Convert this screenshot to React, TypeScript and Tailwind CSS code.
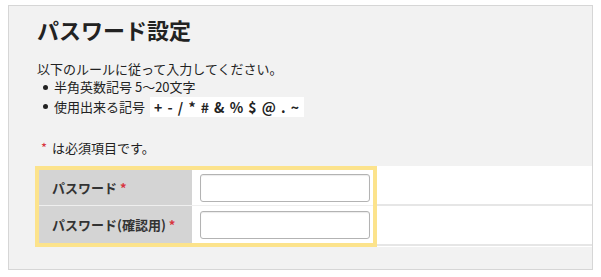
const font = "font-['Noto_Sans_CJK_JP','Noto_Sans',sans-serif]";

function Req() {
  return <span className="ml-[3px] text-[#d8343f]">*</span>;
}

function Row({
  label,
  first,
}: {
  label: string;
  first?: boolean;
}) {
  return (
    <div
      className={
        first
          ? "flex h-[35px]"
          : "flex h-[38px] border-t border-[#efefef]"
      }
    >
      <div className="flex w-[153px] items-center bg-[#d4d4d4] pl-[13px] text-[13px] font-bold text-[#333]">
        {label}
        <Req />
      </div>
      <div className="flex flex-1 items-center bg-white pl-[8px]">
        <input
          type="password"
          className="h-[28px] w-[170px] rounded-[3px] border border-[#b3b3b3] bg-white shadow-[inset_0_1px_1px_rgba(0,0,0,0.08)] outline-none"
        />
      </div>
    </div>
  );
}

function Bullet() {
  return <span className="ml-[6px] mr-[6px] h-[5px] w-[5px] shrink-0 rounded-full bg-[#222]" />;
}

export default function App() {
  return (
    <div className={`h-[277px] w-[601px] bg-white pl-[8px] pt-[5px] ${font}`}>
      <div className="h-[265px] w-[585px] border border-[#d6d6d6] bg-[#f2f2f2] pt-[8px] text-[#222]">
        <h1 className="pl-[28px] text-[22px] font-bold leading-[30px]">
          パスワード設定
        </h1>

        <div className="mt-[16px] pl-[28px] text-[13px]">
          <p className="leading-[18px]">以下のルールに従って入力してください。</p>
          <ul>
            <li className="flex h-[18px] items-center">
              <Bullet />
              半角英数記号 5〜20文字
            </li>
            <li className="flex h-[21px] items-center">
              <Bullet />
              使用出来る記号
              <span className="ml-[5px] bg-white px-[4px] text-[14px] font-bold leading-[20px] tracking-[1px]">
                + - / * # &amp; % $ @ . ~
              </span>
            </li>
          </ul>
        </div>

        <p className="mt-[22px] pl-[32px] text-[13px] leading-[18px]">
          <span className="text-[#d8343f]">*</span>
          <span className="ml-[5px]">は必須項目です。</span>
        </p>

        <div className="ml-[26px] mt-[9px] flex">
          <div className="w-[342px] border-4 border-[#fce38c]">
            <Row label="パスワード" first />
            <Row label="パスワード(確認用)" />
          </div>
          <div className="flex-1 bg-white">
            <div className="h-[40px] border-b-2 border-[#e6e6e6]" />
            <div className="h-[40px] border-b-2 border-[#e6e6e6]" />
          </div>
        </div>
      </div>
    </div>
  );
}
